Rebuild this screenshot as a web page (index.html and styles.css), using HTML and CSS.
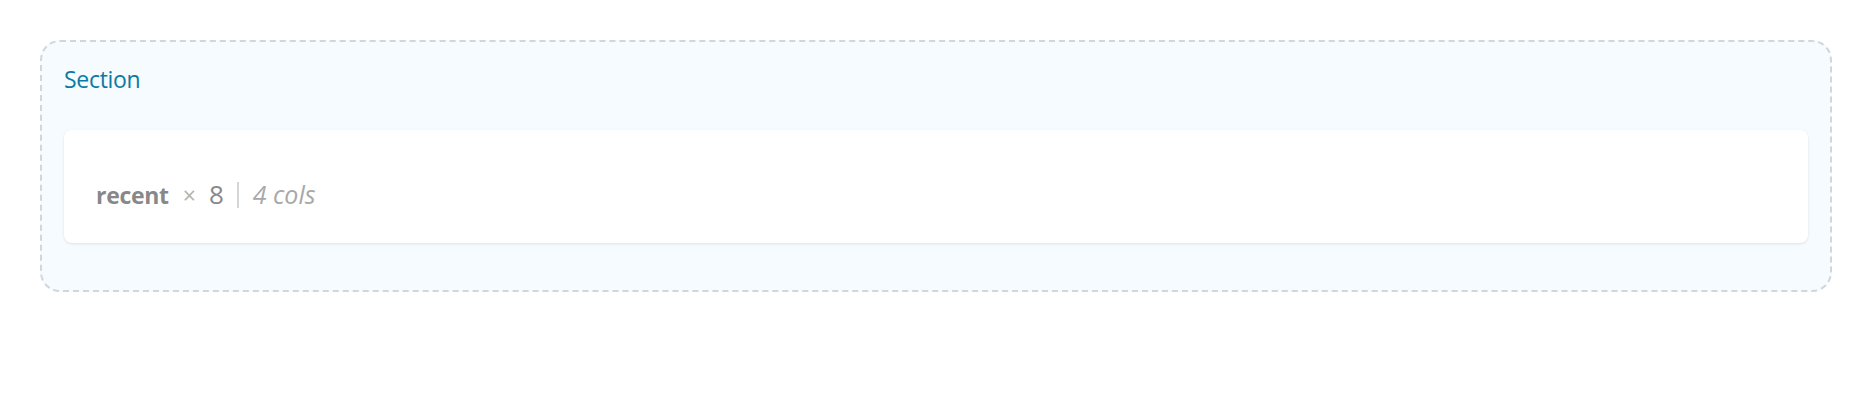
FILE: index.html
```html
<!DOCTYPE html>
<html>
<head>
<meta charset="utf-8">
<link rel="stylesheet" href="styles.css">
</head>
<body>
<div class="page">
  <section class="section">
    <div class="section-title">Section</div>
    <div class="card">
      <div class="summary">
        <span class="name">recent</span>
        <span class="times">×</span>
        <span class="count">8</span>
        <span class="sep"></span>
        <span class="cols">4 cols</span>
      </div>
    </div>
  </section>
</div>
</body>
</html>
```

FILE: styles.css
```css
html, body {
  margin: 0;
  padding: 0;
  background: #ffffff;
  font-family: "Open Sans", "Noto Sans", sans-serif;
}

.page {
  padding: 40px;
}

.section {
  border: 2px dashed #d3d6d9;
  border-radius: 20px;
  background: #f5fbfe;
  padding: 22px 22px 47px 22px;
}

.section-title {
  font-size: 23px;
  letter-spacing: -0.3px;
  line-height: 30px;
  color: #0b7aa3;
  margin-bottom: 36px;
}

.card {
  background: #ffffff;
  border-radius: 8px;
  box-shadow: 0 1px 3px rgba(0, 0, 0, 0.1);
  padding: 49px 32px 33px 32px;
}

.summary {
  display: flex;
  align-items: baseline;
  font-size: 24px;
  line-height: 30px;
  color: #888888;
}

.name {
  font-size: 23px;
  letter-spacing: -0.3px;
  font-weight: 700;
}

.times {
  color: #b3b3b3;
  font-size: 23px;
  margin-left: 14px;
}

.count {
  font-size: 26px;
  margin-left: 13px;
}

.sep {
  align-self: center;
  width: 2px;
  height: 26px;
  background: #d6d6d6;
  margin: 0 14px 0 13px;
}

.cols {
  font-size: 25px;
  font-style: italic;
  color: #a8a8a8;
}
```
